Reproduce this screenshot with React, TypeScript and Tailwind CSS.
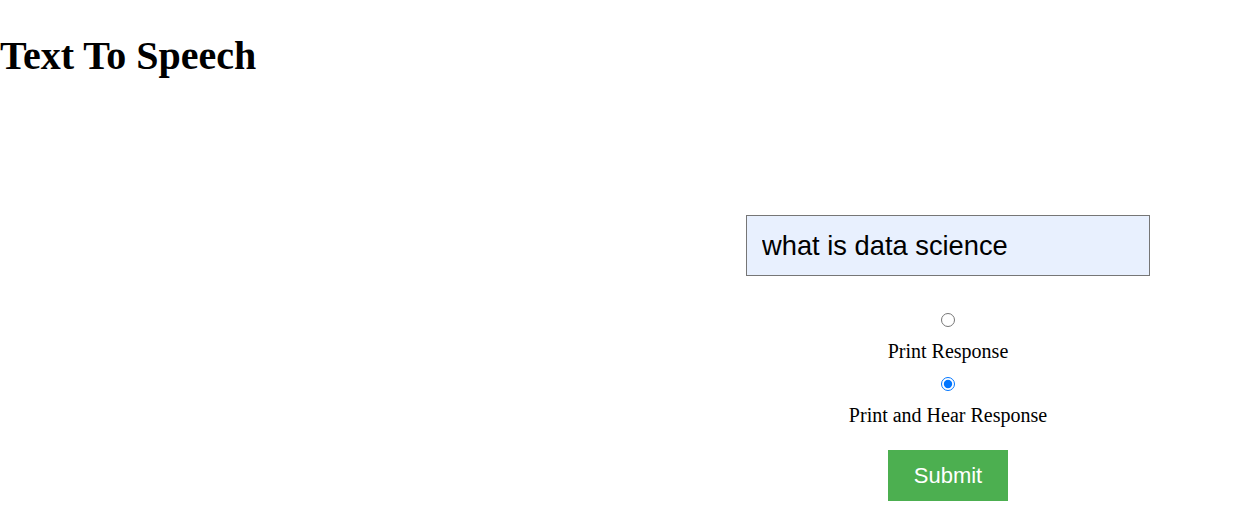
import React, { useState } from "react";

export default function App() {
  const [mode, setMode] = useState("hear");
  const [q, setQ] = useState("what is data science");
  return (
    <div className="min-h-[515px] w-full bg-white text-black font-['Liberation_Serif',_'Times_New_Roman',_serif]">
      <h1 className="m-0 pt-[33px] text-[40px] font-bold leading-[46px]">Text To Speech</h1>
      <div className="flex justify-end pr-[83px] pt-[136px]">
        <form
          className="flex w-[404px] flex-col items-center"
          onSubmit={(e) => e.preventDefault()}
        >
          <input
            type="text"
            value={q}
            onChange={(e) => setQ(e.target.value)}
            className="h-[61px] w-[404px] border border-[#767676] bg-[#e8f0fe] pl-[15px] font-['Liberation_Sans',_Arial,_sans-serif] text-[27.3px] text-black outline-none"
          />
          <input
            type="radio"
            name="mode"
            checked={mode === "print"}
            onChange={() => setMode("print")}
            className="m-0 mt-[37px] h-[14px] w-[14px]"
          />
          <label className="mt-[13px] text-[20px] leading-[23px]">Print Response</label>
          <input
            type="radio"
            name="mode"
            checked={mode === "hear"}
            onChange={() => setMode("hear")}
            className="m-0 mt-[14px] h-[14px] w-[14px]"
          />
          <label className="mt-[13px] text-[20px] leading-[23px]">Print and Hear Response</label>
          <button
            type="submit"
            className="mt-[23px] h-[51px] w-[120px] bg-[#4caf50] font-['Liberation_Sans',_Arial,_sans-serif] text-[22px] text-white"
          >
            Submit
          </button>
        </form>
      </div>
    </div>
  );
}
